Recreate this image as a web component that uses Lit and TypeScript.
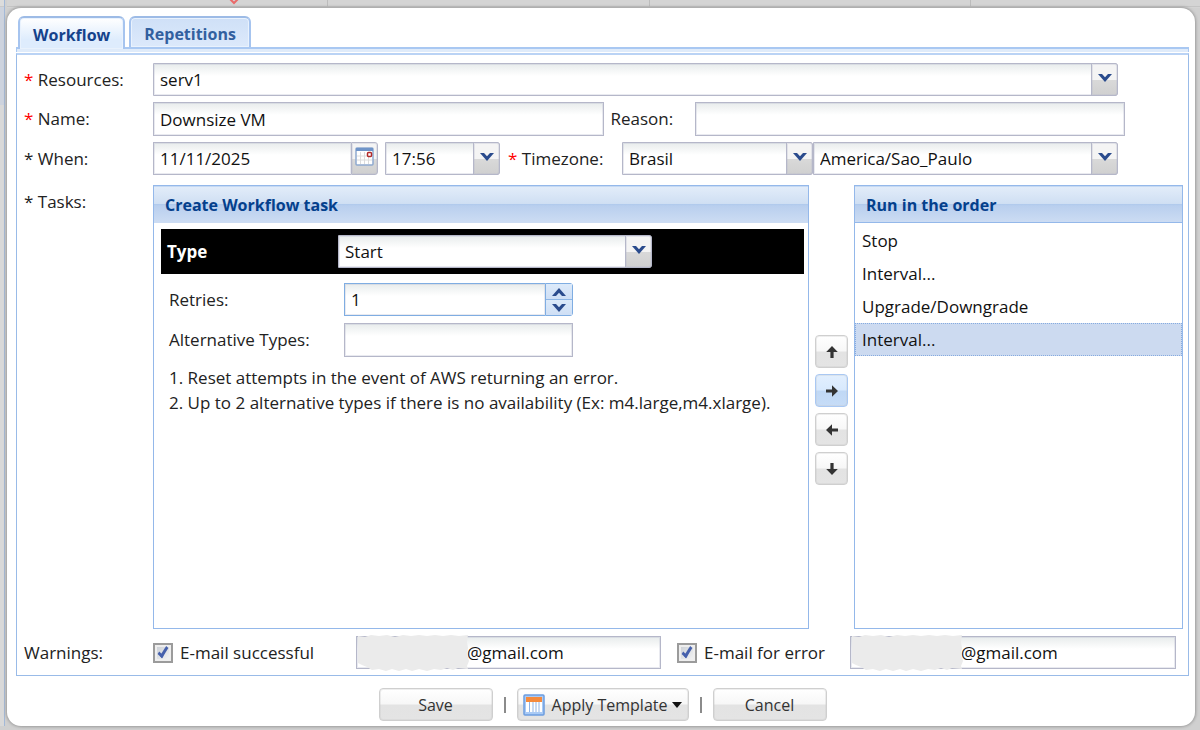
import { LitElement, html, css, svg } from "lit";
import { customElement, property, state } from "lit/decorators.js";
import { classMap } from "lit/directives/class-map.js";

const chevronDown = svg`<path d="M0 0H4L7 3.2L10 0H14L7 8Z" fill="#2a4b8d"/>`;
const chevronUp = svg`<path d="M0 8L7 0L14 8H10L7 4.8L4 8Z" fill="#2a4b8d"/>`;

const controls = css`
  *, *::before, *::after { box-sizing: border-box; }
  input, select, button {
    font: inherit;
    color: inherit;
    margin: 0;
    border-radius: 0;
    outline: none;
  }
  .field {
    height: 34px;
    width: 100%;
    min-width: 0;
    padding: 0 6px;
    border: 1px solid #b5b7c9;
    background: linear-gradient(#e8ecec, #fff 12px);
    box-shadow: inset 0 0 0 1px rgba(181, 184, 205, 0.3);
    color: #111;
    appearance: none;
  }
`;

@customElement("combo-box")
export class ComboBox extends LitElement {
  @property() value = "";
  @property() label = "";

  static styles = [controls, css`
    :host { display: grid; min-width: 0; }
    .field, .trigger { grid-area: 1 / 1; }
    .field { height: 33px; border-radius: 0 3px 3px 0; padding-right: 28px; }
    .trigger {
      justify-self: end;
      width: 27px;
      display: grid;
      place-items: start center;
      padding-top: 10px;
      border: 1px solid #b5b7c9;
      border-radius: 0 3px 3px 0;
      background: linear-gradient(#f4f4f4 50%, #d9d9d9 52%, #d0d0d0);
      box-shadow: inset 0 0 0 1px rgba(181, 184, 205, 0.3);
      pointer-events: none;
    }
  `];

  render() {
    return html`
      <select class="field" aria-label=${this.label}>
        <option>${this.value}</option>
      </select>
      <span class="trigger"><svg width="14" height="8" viewBox="0 0 14 8">${chevronDown}</svg></span>
    `;
  }
}

@customElement("masked-email")
export class MaskedEmail extends LitElement {
  @property() label = "";

  static styles = [controls, css`
    :host { display: block; position: relative; min-width: 0; }
    .field { height: 33px; padding-left: 110px; display: block; }
    .mask { position: absolute; left: 1px; top: -2px; }
  `];

  render() {
    return html`
      <input class="field" type="text" aria-label=${this.label} .value=${"@gmail.com"} />
      <svg class="mask" width="112" height="38" viewBox="0 0 112 38" aria-hidden="true">
        <path fill="#ebebeb" d="M1 2L8 3L14 1L22 2L30 1L38 3L46 1L54 2L62 1L70 2L78 1L86 2L94 1L102 2L111 1L110 8L111 14L110 20L112 27L110 32L111 35L101 34L96 36L90 34L84 36L77 35L70 37L62 35L55 37L49 35L42 37L35 35L29 37L22 35L15 36L10 33L5 31L1 29Z"/>
      </svg>
    `;
  }
}

@customElement("app-root")
export class AppRoot extends LitElement {
  @state() private selected = 3;
  private steps = ["Stop", "Interval...", "Upgrade/Downgrade", "Interval..."];

  static styles = [controls, css`
    :host {
      display: grid;
      grid-template-columns: 7px minmax(0, 1fr);
      grid-template-rows: 8px minmax(0, 1fr);
      min-height: 100vh;
      padding: 0 5px 4px 0;
      box-sizing: border-box;
      background: #d0d0d0;
      color: #222;
      font: 17px/24px "Open Sans", "Noto Sans", sans-serif;
    }
    .edge {
      grid-row: 1 / 3;
      border-right: 1px solid #a3b9d8;
      margin-right: 2px;
      background: linear-gradient(#dcdcdc 6px, #c9c9c9 6px 7px, #cdd3de 7px 105px, #d9d9d9 105px);
    }
    .columns {
      display: grid;
      grid-template-columns: 323fr 323fr 323fr 230fr;
      align-items: start;
      background: #d4d4d4;
      margin-right: -5px;
    }
    .columns span { height: 7px; border-right: 1px solid #bcbcbc; border-bottom: 1px solid #c4c4c4; }
    .columns span:last-child { border-right: 0; }
    .columns .due { display: grid; justify-content: start; padding-left: 221px; }
    .dialog {
      display: flex;
      flex-direction: column;
      min-width: 0;
      background: #fff;
      border-radius: 14px;
      padding: 8px 6px 5px 9px;
      box-shadow: 0 0 3px 1px #9b9b9b;
    }
    .tabs { display: flex; gap: 4px; padding-left: 2px; z-index: 1; margin-bottom: -2px; }
    .tab {
      height: 31px;
      padding: 2px 13px 0;
      border: 2px solid #9cbfee;
      border-color: #9dbbe6 #a6c4ef #a6c4ef;
      border-bottom: 0;
      border-radius: 6px 6px 0 0;
      background: linear-gradient(#cfe0f7, #dce9fb);
      box-shadow: inset 0 0 0 1px #e9f2fd;
      color: #32609f;
      font-size: 16px;
      font-weight: 700;
      line-height: 24px;
    }
    .tab.active {
      height: 33px;
      background: linear-gradient(#fff, #deecfd 70%);
      color: #15428b;
    }
    .strip { height: 5px; background: #dfebfa; border: 1px solid #a9c8f2; border-top-width: 2px; border-bottom: 0; }
    .body {
      display: flex;
      flex-direction: column;
      flex: 1;
      margin-top: 1px;
      padding: 8px 5px 6px 7px;
      border: 1px solid #99bbe8;
      border-top: 2px solid #bad3f5;
    }
    .row {
      display: grid;
      grid-template-columns: 129px minmax(0, 1fr);
      align-items: center;
    }
    .row + .row { margin-top: 6px; }
    .line { display: flex; align-items: center; min-width: 0; }
    .short { padding-right: 65px; }
    .medium { padding-right: 58px; }
    .req { color: #f00; }
    .w450 { flex: 450; }
    .w430 { flex: 430; }
    .reason { width: 91px; padding-left: 7px; }
    .grow { flex: 1; }
    .date { display: flex; width: 225px; }
    .date .field { height: 33px; border-right: 0; }
    .pick {
      width: 27px;
      flex: none;
      padding: 0 0 3px;
      display: grid;
      place-items: center;
      border: 1px solid #b5b7c9;
      border-radius: 0 3px 3px 0;
      background: linear-gradient(#f4f4f4 50%, #d9d9d9 52%, #d0d0d0);
      box-shadow: inset 0 0 0 1px rgba(181, 184, 205, 0.3);
    }
    .time { width: 115px; margin-left: 7px; }
    .zone { width: 122px; padding-left: 8px; }
    .country { width: 191px; }
    .row.tasks { flex: 1; align-items: stretch; margin-top: 10px; }
    .tasks > .name { padding-top: 5px; }
    .board { display: flex; gap: 6px; min-width: 0; }
    .panel { border: 1px solid #94b8ea; min-width: 0; min-height: 300px; }
    .panel.create { flex: 656; }
    .panel.order { flex: 328; }
    .panel h2 {
      margin: 0;
      height: 37px;
      padding: 0 11px;
      border-top: 1px solid #c5d9f3;
      border-bottom: 1px solid #94b8ea;
      background: linear-gradient(#e2ecf9, #cfdff3 48%, #afc9ec 49%, #b9cfee 54%, #ccdcf3);
      color: #04408c;
      font-size: 16px;
      font-weight: 700;
      line-height: 36px;
    }
    .create h2 { border-bottom-color: #ccdcf3; }
    .type {
      display: grid;
      grid-template-columns: 171px minmax(0, 314px);
      align-items: center;
      margin: 6px 4px 0 7px;
      padding: 6px;
      background: #000;
      color: #fff;
      font-weight: 700;
    }
    .type combo-box { font-weight: 400; }
    .form { padding: 9px 15px; }
    .pair {
      display: grid;
      grid-template-columns: 175px minmax(0, 229px);
      align-items: center;
      margin-bottom: 7px;
    }
    .spin { display: flex; }
    .spin .field { height: 33px; border-color: #7fade2; border-right: 0; appearance: textfield; }
    .spin .field::-webkit-inner-spin-button { appearance: none; }
    .arrows { display: grid; width: 28px; flex: none; border: 1px solid #7fade2; border-radius: 0 3px 3px 0; background: #8db6e6; gap: 1px; }
    .arrows button { display: grid; place-items: center; padding: 0; border: 0; background: linear-gradient(#dceafa, #cfdff5); }
    .notes { margin: 0; padding: 1px 0 0; list-style: none; }
    .notes li { line-height: 25px; }
    .moves { display: flex; flex-direction: column; justify-content: center; gap: 6px; width: 33px; padding-top: 6px; }
    .btn {
      border: 1px solid #cfcfcf;
      border-radius: 4px;
      background: linear-gradient(#fff, #f7f7f7 48%, #e3e3e3 52%, #e4e4e4);
      box-shadow: inset 0 0 0 1px rgba(200, 200, 200, 0.3);
      color: #333;
    }
    .moves .btn { height: 33px; padding: 0; display: grid; place-items: center; }
    .moves .btn.on { border-color: #a9c8f3; background: linear-gradient(#e2effe, #d8e9fd 48%, #c0d8f5 52%, #c6dcf7); }
    .steps { list-style: none; margin: 0; padding: 1px 0 0; }
    .steps button {
      display: block;
      width: 100%;
      height: 33px;
      padding: 0 6px;
      border: 1px dotted transparent;
      background: none;
      text-align: left;
      color: #111;
    }
    .steps .sel button { background: #ccdaf0; border-color: #86abe0; }
    .row.warn { margin-top: 7px; }
    .warn .line { padding-right: 7px; }
    .check { display: flex; align-items: center; gap: 7px; flex: none; width: 203px; }
    .check.error { width: 189px; padding-left: 16px; }
    .check input {
      appearance: none;
      display: grid;
      width: 20px;
      height: 20px;
      flex: none;
      border: 2px solid #9b9b9b;
      background: linear-gradient(135deg, #c8cdd4, #f6f6f6);
      box-shadow: inset 0 0 0 2px #eeeeee;
    }
    .check input:checked::after {
      content: "";
      width: 6px;
      height: 12px;
      margin: 0 auto;
      border: solid #4560ac;
      border-width: 0 3px 3px 0;
      transform: rotate(32deg) skewY(12deg);
    }
    .ok { flex: 305; }
    .err { flex: 326; }
    .actions { display: flex; align-items: center; justify-content: center; gap: 10px; padding-top: 12px; }
    .actions .btn { height: 33px; width: 114px; padding: 0; font-size: 16px; }
    .actions .btn.tpl { width: 172px; display: flex; align-items: center; justify-content: center; gap: 7px; }
    .caret { border: 5px solid transparent; border-top: 6px solid #111; border-bottom: 0; margin-left: -2px; }
    .bar { width: 2px; height: 16px; background: #8b8b8b; }
    .actions .bar { margin: 0 1px; }
  `];

  private arrow(angle: number, name: string, on = false) {
    return html`<button class=${classMap({ btn: true, on })} aria-label=${name}>
      <svg width="14" height="14" viewBox="0 0 14 14">
        <path transform="rotate(${angle} 7 7)" d="M1 5.4H7V1.2L13 7L7 12.8V8.6H1Z" fill="#333"/>
      </svg>
    </button>`;
  }

  render() {
    return html`
      <div class="edge"></div>
      <div class="columns">
        <span class="due"><svg width="12" height="6" viewBox="0 0 12 6"><path d="M2 -1L6 3L10 -1" fill="none" stroke="#ea6a6a" stroke-width="2"/></svg></span><span></span><span></span><span></span>
      </div>
      <main class="dialog">
        <div class="tabs" role="tablist">
          <button class="tab active" role="tab" aria-selected="true">Workflow</button>
          <button class="tab" role="tab" aria-selected="false">Repetitions</button>
        </div>
        <div class="strip"></div>
        <section class="body">
          <div class="row">
            <span><span class="req">*</span> Resources:</span>
            <div class="line short"><combo-box class="grow" label="Resources" value="serv1"></combo-box></div>
          </div>
          <div class="row">
            <label for="name"><span class="req">*</span> Name:</label>
            <div class="line medium">
              <div class="w450"><input class="field" id="name" .value=${"Downsize VM"} /></div>
              <label class="reason" for="reason">Reason:</label>
              <div class="w430"><input class="field" id="reason" /></div>
            </div>
          </div>
          <div class="row">
            <label for="when">* When:</label>
            <div class="line short">
              <div class="date">
                <input class="field" id="when" .value=${"11/11/2025"} />
                <button class="pick" aria-label="Choose date">
                  <svg width="20" height="20" viewBox="0 0 20 20">
                    <rect x="1" y="1" width="17" height="17" rx="1" fill="#fff" stroke="#8ea9cf" stroke-width="1.5"/>
                    <path d="M1 2.5H18" stroke="#6f94c8" stroke-width="3"/>
                    <path d="M5.5 5V17M9.5 5V17M13.5 5V17M2 9H17M2 13H17" stroke="#dcdcdc"/>
                    <rect x="12.5" y="5.5" width="4" height="4" rx="1" fill="#fff" stroke="#b22a2a" stroke-width="1.5"/>
                  </svg>
                </button>
              </div>
              <combo-box class="time" label="Time" value="17:56"></combo-box>
              <span class="zone"><span class="req">*</span> Timezone:</span>
              <combo-box class="country" label="Country" value="Brasil"></combo-box>
              <combo-box class="grow" label="Timezone" value="America/Sao_Paulo"></combo-box>
            </div>
          </div>
          <div class="row tasks">
            <span class="name">* Tasks:</span>
            <div class="board">
              <section class="panel create">
                <h2>Create Workflow task</h2>
                <div class="type">
                  <span>Type</span>
                  <combo-box label="Type" value="Start"></combo-box>
                </div>
                <div class="form">
                  <div class="pair">
                    <label for="retries">Retries:</label>
                    <div class="spin">
                      <input class="field" id="retries" type="number" .value=${"1"} />
                      <div class="arrows">
                        <button aria-label="Increase"><svg width="14" height="8" viewBox="0 0 14 8">${chevronUp}</svg></button>
                        <button aria-label="Decrease"><svg width="14" height="8" viewBox="0 0 14 8">${chevronDown}</svg></button>
                      </div>
                    </div>
                  </div>
                  <div class="pair">
                    <label for="alt">Alternative Types:</label>
                    <input class="field" id="alt" />
                  </div>
                  <ul class="notes">
                    <li>1. Reset attempts in the event of AWS returning an error.</li>
                    <li>2. Up to 2 alternative types if there is no availability (Ex: m4.large,m4.xlarge).</li>
                  </ul>
                </div>
              </section>
              <div class="moves">
                ${this.arrow(-90, "Move up")}
                ${this.arrow(0, "Add", true)}
                ${this.arrow(180, "Remove")}
                ${this.arrow(90, "Move down")}
              </div>
              <section class="panel order">
                <h2>Run in the order</h2>
                <ul class="steps">
                  ${this.steps.map((s, i) => html`
                    <li class=${classMap({ sel: i === this.selected })}>
                      <button @click=${() => (this.selected = i)}>${s}</button>
                    </li>`)}
                </ul>
              </section>
            </div>
          </div>
          <div class="row warn">
            <span>Warnings:</span>
            <div class="line">
              <label class="check"><input type="checkbox" checked />E-mail successful</label>
              <masked-email class="ok" label="Success e-mail"></masked-email>
              <label class="check error"><input type="checkbox" checked />E-mail for error</label>
              <masked-email class="err" label="Error e-mail"></masked-email>
            </div>
          </div>
        </section>
        <footer class="actions">
          <button class="btn">Save</button>
          <span class="bar"></span>
          <button class="btn tpl">
            <svg width="22" height="22" viewBox="0 0 22 22">
              <rect x="1" y="1" width="20" height="20" rx="1" fill="#a9caf5" stroke="#6c9de0" stroke-width="1.5"/>
              <rect x="3" y="3" width="16" height="15" fill="#fff"/>
              <path d="M3 3H19V8H3Z" fill="#f58a3c"/>
              <path d="M6.5 8V18M10 8V18M13 8V18M16 8V18" stroke="#8fb4e6"/>
            </svg>
            Apply Template
            <span class="caret"></span>
          </button>
          <span class="bar"></span>
          <button class="btn">Cancel</button>
        </footer>
      </main>
    `;
  }
}
